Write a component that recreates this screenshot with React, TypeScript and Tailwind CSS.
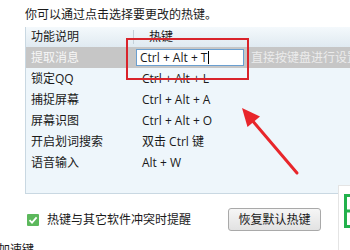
import React from "react";

const rows = [
  { name: "锁定QQ", key: "Ctrl + Alt + L" },
  { name: "捕捉屏幕", key: "Ctrl + Alt + A" },
  { name: "屏幕识图", key: "Ctrl + Alt + O" },
  { name: "开启划词搜索", key: "双击 Ctrl 键" },
  { name: "语音输入", key: "Alt + W" },
];

export default function App() {
  return (
    <div
      className="relative w-[350px] h-[250px] overflow-hidden bg-white text-[12px] text-[#1a1a1a]"
      style={{ fontFamily: '"Open Sans", "Noto Sans CJK SC", sans-serif' }}
    >
      <div className="pl-[25px] pt-[7px] h-[27px] leading-[16px]">
        你可以通过点击选择要更改的热键。
      </div>

      {/* hotkey table */}
      <div className="ml-[25px] w-[340px] h-[167px] bg-[#eef6fb] border-l border-b border-[#c9d8e2]">
        <div className="flex h-[20px] items-center bg-gradient-to-b from-[#f4f9fc] to-[#e0eaf1]">
          <div className="w-[108px] pl-[5px] relative h-full flex items-center">
            功能说明
            <span className="absolute right-0 top-[3px] h-[14px] w-px bg-[#c3d0d9]" />
          </div>
          <div className="pl-[15px]">热键</div>
        </div>

        <div className="flex h-[21px] items-center bg-[#c6c6c6]">
          <div className="w-[110px] pl-[5px] text-[#f7f7f7]">提取消息</div>
          <div className="w-[108px] h-[17px] bg-white border border-[#6a9fd0] pl-[3px] flex items-center leading-none">
            Ctrl + Alt + T
            <span className="ml-[1px] w-px h-[13px] bg-black" />
          </div>
          <div className="pl-[7px] text-[#ececec] whitespace-nowrap">直接按键盘进行设置</div>
        </div>

        {rows.map((r) => (
          <div key={r.name} className="flex h-[21px] items-center">
            <div className="w-[108px] pl-[5px]">{r.name}</div>
            <div className="pl-[8px]">{r.key}</div>
          </div>
        ))}
      </div>

      {/* bottom row */}
      <div className="flex items-center h-[49px] pl-[27px] pt-[2px]">
        <div className="w-[12px] h-[12px] rounded-[1px] bg-[#5cb85c] flex items-center justify-center">
          <svg width="10" height="10" viewBox="0 0 10 10">
            <path d="M1.5 5.2 L4 7.6 L8.6 2.4" fill="none" stroke="#fff" strokeWidth="1.8" />
          </svg>
        </div>
        <span className="ml-[8px]">热键与其它软件冲突时提醒</span>
        <button className="ml-[37px] w-[93px] h-[23px] rounded-[3px] border border-[#a9a9a9] bg-gradient-to-b from-[#f6f6f6] to-[#e2e2e2] text-[12px] text-[#1a1a1a]">
          恢复默认热键
        </button>
      </div>
      <div className="-ml-[2px] leading-[14px]">加速键</div>

      {/* cut-off panel at right edge */}
      <div className="absolute left-[338px] top-[185px] w-[20px] h-[70px] bg-white border-l border-t border-[#e4e4e4]">
        <svg width="20" height="40" viewBox="0 0 20 40" className="mt-[8px] ml-[5px]">
          <path d="M1.5 0 V34 M1.5 1.5 H20 M1.5 17 H20 M1.5 32.5 H20" fill="none" stroke="#22b14c" strokeWidth="3" />
        </svg>
      </div>

      {/* annotation overlays */}
      <div className="absolute left-[126px] top-[38px] w-[123px] h-[42px] border-2 border-[#d9232b]" />
      <svg className="absolute left-0 top-0" width="350" height="250" viewBox="0 0 350 250">
        <line x1="297" y1="173" x2="251" y2="119" stroke="#e8262b" strokeWidth="3" strokeLinecap="round" />
        <polygon points="242,108 260,116.5 247.5,127" fill="#e8262b" />
      </svg>
    </div>
  );
}
